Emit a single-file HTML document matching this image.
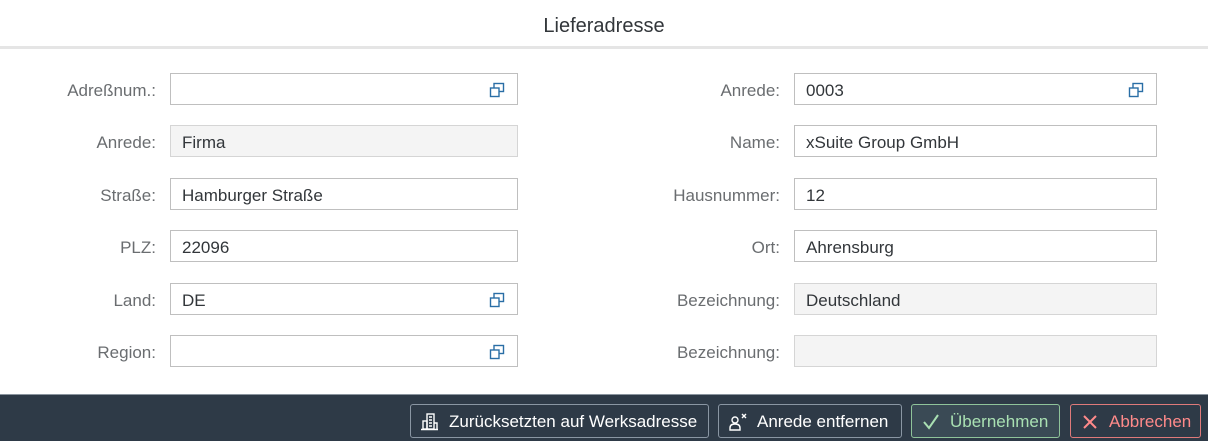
<!DOCTYPE html>
<html><head><meta charset="utf-8"><style>
*{box-sizing:border-box;margin:0;padding:0}
body{width:1208px;height:441px;background:#fff;font-family:"Liberation Sans",Arial,sans-serif;position:relative;overflow:hidden}
.title{position:absolute;top:0;left:0;width:1208px;height:46px;line-height:52px;text-align:center;font-size:20px;color:#32363a}
.hl{position:absolute;top:46px;left:0;width:1208px;height:3px;background:#e5e5e5}
.lbl{position:absolute;font-size:17px;color:#6a6d70;text-align:right;height:32px;line-height:35px}
.in{position:absolute;height:32px;border:1px solid #bfbfbf;background:#fff;font-size:17px;color:#32363a;line-height:33px;padding-left:11px}
.in.ro{background:#f4f4f4;border-color:#d5d5d5}
.vh{position:absolute;right:12px;top:8px;width:16px;height:16px}
.foot{position:absolute;top:394px;left:0;width:1208px;height:47px;background:#2e3a47;border-top:1px solid #8a949e}
.btn{position:absolute;top:9px;height:34px;border:1px solid #8a96a3;border-radius:3px;background:#2e3a47;color:#fff;font-size:17px;line-height:34px;padding-left:38px;white-space:nowrap}
.btn svg{position:absolute;left:10px;top:8px}
</style></head><body>
<div class="title">Lieferadresse</div>
<div class="hl"></div>

<div class="lbl" style="left:0;width:156px;top:73px">Adreßnum.:</div>
<div class="in" style="left:170px;width:348px;top:73px"><svg class="vh" viewBox="0 0 16 16"><rect x="5" y="1.5" width="9.5" height="8" fill="none" stroke="#2a6ea6" stroke-width="1.4"/><rect x="1.5" y="6" width="8.5" height="8.5" fill="#fff" stroke="#2a6ea6" stroke-width="1.4"/></svg></div>
<div class="lbl" style="left:0;width:156px;top:125px">Anrede:</div>
<div class="in ro" style="left:170px;width:348px;top:125px">Firma</div>
<div class="lbl" style="left:0;width:156px;top:178px">Straße:</div>
<div class="in" style="left:170px;width:348px;top:178px">Hamburger Straße</div>
<div class="lbl" style="left:0;width:156px;top:230px">PLZ:</div>
<div class="in" style="left:170px;width:348px;top:230px">22096</div>
<div class="lbl" style="left:0;width:156px;top:283px">Land:</div>
<div class="in" style="left:170px;width:348px;top:283px">DE<svg class="vh" viewBox="0 0 16 16"><rect x="5" y="1.5" width="9.5" height="8" fill="none" stroke="#2a6ea6" stroke-width="1.4"/><rect x="1.5" y="6" width="8.5" height="8.5" fill="#fff" stroke="#2a6ea6" stroke-width="1.4"/></svg></div>
<div class="lbl" style="left:0;width:156px;top:335px">Region:</div>
<div class="in" style="left:170px;width:348px;top:335px"><svg class="vh" viewBox="0 0 16 16"><rect x="5" y="1.5" width="9.5" height="8" fill="none" stroke="#2a6ea6" stroke-width="1.4"/><rect x="1.5" y="6" width="8.5" height="8.5" fill="#fff" stroke="#2a6ea6" stroke-width="1.4"/></svg></div>

<div class="lbl" style="left:560px;width:220px;top:73px">Anrede:</div>
<div class="in" style="left:794px;width:363px;top:73px">0003<svg class="vh" viewBox="0 0 16 16"><rect x="5" y="1.5" width="9.5" height="8" fill="none" stroke="#2a6ea6" stroke-width="1.4"/><rect x="1.5" y="6" width="8.5" height="8.5" fill="#fff" stroke="#2a6ea6" stroke-width="1.4"/></svg></div>
<div class="lbl" style="left:560px;width:220px;top:125px">Name:</div>
<div class="in" style="left:794px;width:363px;top:125px">xSuite Group GmbH</div>
<div class="lbl" style="left:560px;width:220px;top:178px">Hausnummer:</div>
<div class="in" style="left:794px;width:363px;top:178px">12</div>
<div class="lbl" style="left:560px;width:220px;top:230px">Ort:</div>
<div class="in" style="left:794px;width:363px;top:230px">Ahrensburg</div>
<div class="lbl" style="left:560px;width:220px;top:283px">Bezeichnung:</div>
<div class="in ro" style="left:794px;width:363px;top:283px">Deutschland</div>
<div class="lbl" style="left:560px;width:220px;top:335px">Bezeichnung:</div>
<div class="in ro" style="left:794px;width:363px;top:335px"></div>

<div class="foot">
<div class="btn" style="left:410px;width:299px"><svg width="18" height="18" viewBox="0 0 18 18" fill="none" stroke="#fff" stroke-width="1.4"><rect x="6" y="1" width="7" height="15"/><rect x="2" y="8" width="4" height="8"/><path d="M8 4h3M8 7h3M8 10h3M8 13h3M0 16.5h17M13 10h3v6"/></svg>Zurücksetzten auf Werksadresse</div>
<div class="btn" style="left:718px;width:184px"><svg width="20" height="18" viewBox="0 0 20 18" fill="none" stroke="#fff" stroke-width="1.4"><circle cx="6" cy="7" r="3"/><path d="M1 17v-2q0-4 5-4t5 4v2zM13 1l4 4M17 1l-4 4"/></svg>Anrede entfernen</div>
<div class="btn" style="left:911px;width:149px;border-color:#8fc39a;background:#3a4a55;color:#a9e0b2"><svg width="18" height="18" viewBox="0 0 18 18" fill="none" stroke="#a9e0b2" stroke-width="2"><path d="M2 9l5 6 9-13"/></svg>Übernehmen</div>
<div class="btn" style="left:1070px;width:131px;border-color:#e07a7a;color:#ff8a8a"><svg width="18" height="18" viewBox="0 0 18 18" fill="none" stroke="#ff8a8a" stroke-width="2"><path d="M3 3l12 12M15 3L3 15"/></svg>Abbrechen</div>
</div>
</body></html>
